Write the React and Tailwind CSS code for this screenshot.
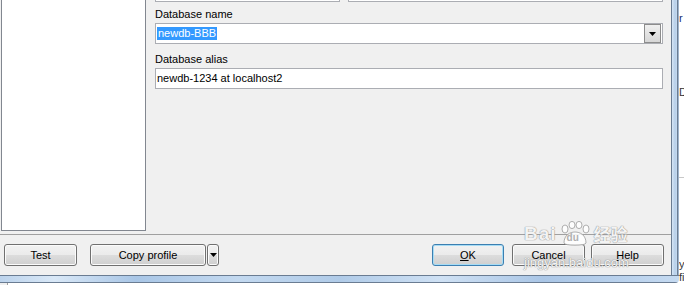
export default function App() {
  const btn =
    "h-[22px] flex items-center justify-center rounded-[3px] border border-[#707070] bg-[linear-gradient(#f2f2f2_0%,#ebebeb_50%,#dddddd_50%,#cfcfcf_100%)] shadow-[inset_0_0_0_1px_#fbfbfb] text-[11px] leading-[13px] text-black";
  const wm = "text-white/90 [text-shadow:0_0_1px_#8a8a8a,0_0_1px_#8a8a8a]";
  return (
    <div className="relative w-[684px] h-[285px] overflow-hidden bg-white font-['Liberation_Sans',Arial,sans-serif] text-[11px] text-black">
      <div className="flex">
        {/* dialog */}
        <div className="flex flex-col w-[679px] h-[283px]">
          <div className="flex h-[275px]">
            {/* content */}
            <div className="flex flex-col w-[671px] bg-[#F0F0F0]">
              <div className="flex h-[234px]">
                {/* list */}
                <div className="ml-[1px] w-[145px] h-[231px] bg-white border-l border-r border-b border-[#828790]" />
                {/* fields */}
                <div className="ml-[9px] w-[508px] flex flex-col">
                  <div className="flex h-[2px]">
                    <div className="w-[185px] bg-white border-l border-r border-b border-[#ABADB3]" />
                    <div className="ml-[8px] flex-1 bg-white border-l border-r border-b border-[#ABADB3]" />
                  </div>
                  <div className="mt-[6px] h-[13px] leading-[13px] text-[#000]">Database name</div>
                  <div className="mt-[2px] h-[21px] flex items-center bg-white border border-[#ABADB3]">
                    <span className="ml-[1px] px-[1px] h-[13px] leading-[13px] bg-[#3399FF] text-white">newdb-BBB</span>
                    <div className="ml-auto mr-[1px] w-[17px] h-[19px] flex items-center justify-center border border-[#8C8C8C] bg-[linear-gradient(#f0f0f0,#d6d6d6)]">
                      <svg width="7" height="4" viewBox="0 0 7 4">
                        <path d="M0 0H7L3.5 4Z" fill="#000" />
                      </svg>
                    </div>
                  </div>
                  <div className="mt-[9px] h-[13px] leading-[13px]">Database alias</div>
                  <div className="mt-[2px] h-[21px] flex items-center bg-white border border-[#ABADB3]">
                    <span className="ml-[1px] h-[13px] leading-[13px]">newdb-1234 at localhost2</span>
                  </div>
                </div>
              </div>
              <div className="h-[1px] bg-[#A0A0A0]" />
              <div className="mt-[9px] flex items-start">
                <div className={`${btn} ml-[4px] w-[73px]`}>Test</div>
                <div className={`${btn} ml-[13px] w-[116px]`}>Copy profile</div>
                <div className={`${btn} ml-[1px] w-[12px]`}>
                  <svg width="7" height="4" viewBox="0 0 7 4">
                    <path d="M0 0H7L3.5 4Z" fill="#000" />
                  </svg>
                </div>
                <div className="ml-auto h-[22px] w-[72px] flex items-center justify-center rounded-[3px] border border-[#3C7FB1] bg-[linear-gradient(#f2f2f2_0%,#ebebeb_50%,#dddddd_50%,#cfcfcf_100%)] shadow-[inset_0_0_0_1px_#a6dcf5] leading-[13px]">
                  <span><span className="underline">O</span>K</span>
                </div>
                <div className={`${btn} ml-[8px] w-[73px]`}>Cancel</div>
                <div className={`${btn} ml-[6px] mr-[7px] w-[73px]`}>
                  <span><span className="underline">H</span>elp</span>
                </div>
              </div>
            </div>
            {/* right frame */}
            <div className="w-[8px] bg-[linear-gradient(to_right,#6a7c92_0px,#6a7c92_1px,#d6e6f6_1px,#b7cfe9_4px,#c6dbf1_6px,#6a7c92_6px,#6a7c92_7px,#9fb4cc_7px)]" />
          </div>
          {/* bottom frame */}
          <div className="h-[8px] rounded-br-[4px] bg-[linear-gradient(to_bottom,#6a7c92_0px,#6a7c92_1px,transparent_1px,transparent_7px,#6a7c92_7px)] relative overflow-hidden">
            <div className="absolute inset-x-0 top-[1px] h-[6px] bg-[linear-gradient(to_right,#bcd3ec_0%,#d9e8f7_8%,#a9c6e6_20%,#c3d9f0_35%,#b0cbe8_50%,#cfe1f4_65%,#aac6e6_80%,#c5daf1_100%)]" />
          </div>
        </div>
        {/* outside strip */}
        <div className="relative w-[5px] h-[283px] overflow-hidden">
          <span className="absolute left-0 top-[12px] text-[11px] leading-[13px] text-[#1a2b6e]">r</span>
          <span className="absolute left-0 top-[86px] text-[11px] leading-[13px] text-[#333]">D</span>
          <div className="absolute left-0 top-[177px] w-[5px] h-[1px] bg-[#C8C8C8]" />
          <span className="absolute left-0 top-[258px] text-[11px] leading-[13px] text-[#333]">y-</span>
          <span className="absolute left-0 top-[271px] text-[11px] leading-[13px] text-[#333]">fi</span>
        </div>
      </div>
      <div className="flex h-[2px]">
        <div className="w-[7px] bg-[#F0F0F0]" />
        <div className="w-[1px] bg-[#A0A0A0]" />
      </div>
      {/* watermark */}
      <div className={`absolute left-[524px] top-[221px] flex items-center pointer-events-none ${wm}`}>
        <span className="text-[19px] font-bold leading-[18px] tracking-[1px]">Bai</span>
        <div className="relative ml-[1px] w-[34px] h-[26px]">
          <svg width="34" height="26" viewBox="0 0 34 26" className="absolute left-0 top-0">
            <g fill="#ffffff" fillOpacity="0.85" stroke="#9a9a9a" strokeWidth="0.8">
              <ellipse cx="7" cy="8" rx="3" ry="4" />
              <ellipse cx="14" cy="4" rx="3" ry="3.6" />
              <ellipse cx="21" cy="4" rx="3" ry="3.6" />
              <ellipse cx="28" cy="8" rx="3" ry="4" />
              <path d="M6 22 C6 14 12 11 17 11 C22 11 28 14 28 22 C28 25 6 25 6 22Z" />
            </g>
          </svg>
          <span className="absolute left-[9px] top-[12px] text-[10px] font-bold leading-[10px] text-[#b0b0b0] [text-shadow:none]">du</span>
        </div>
        <span className="ml-[2px] text-[17px] font-bold leading-[18px] font-['Noto_Sans_CJK_SC',sans-serif]">经验</span>
      </div>
      <div className={`absolute left-[524px] top-[256px] text-[13px] leading-[13px] pointer-events-none ${wm}`}>jingyan.baidu.com</div>
    </div>
  );
}
